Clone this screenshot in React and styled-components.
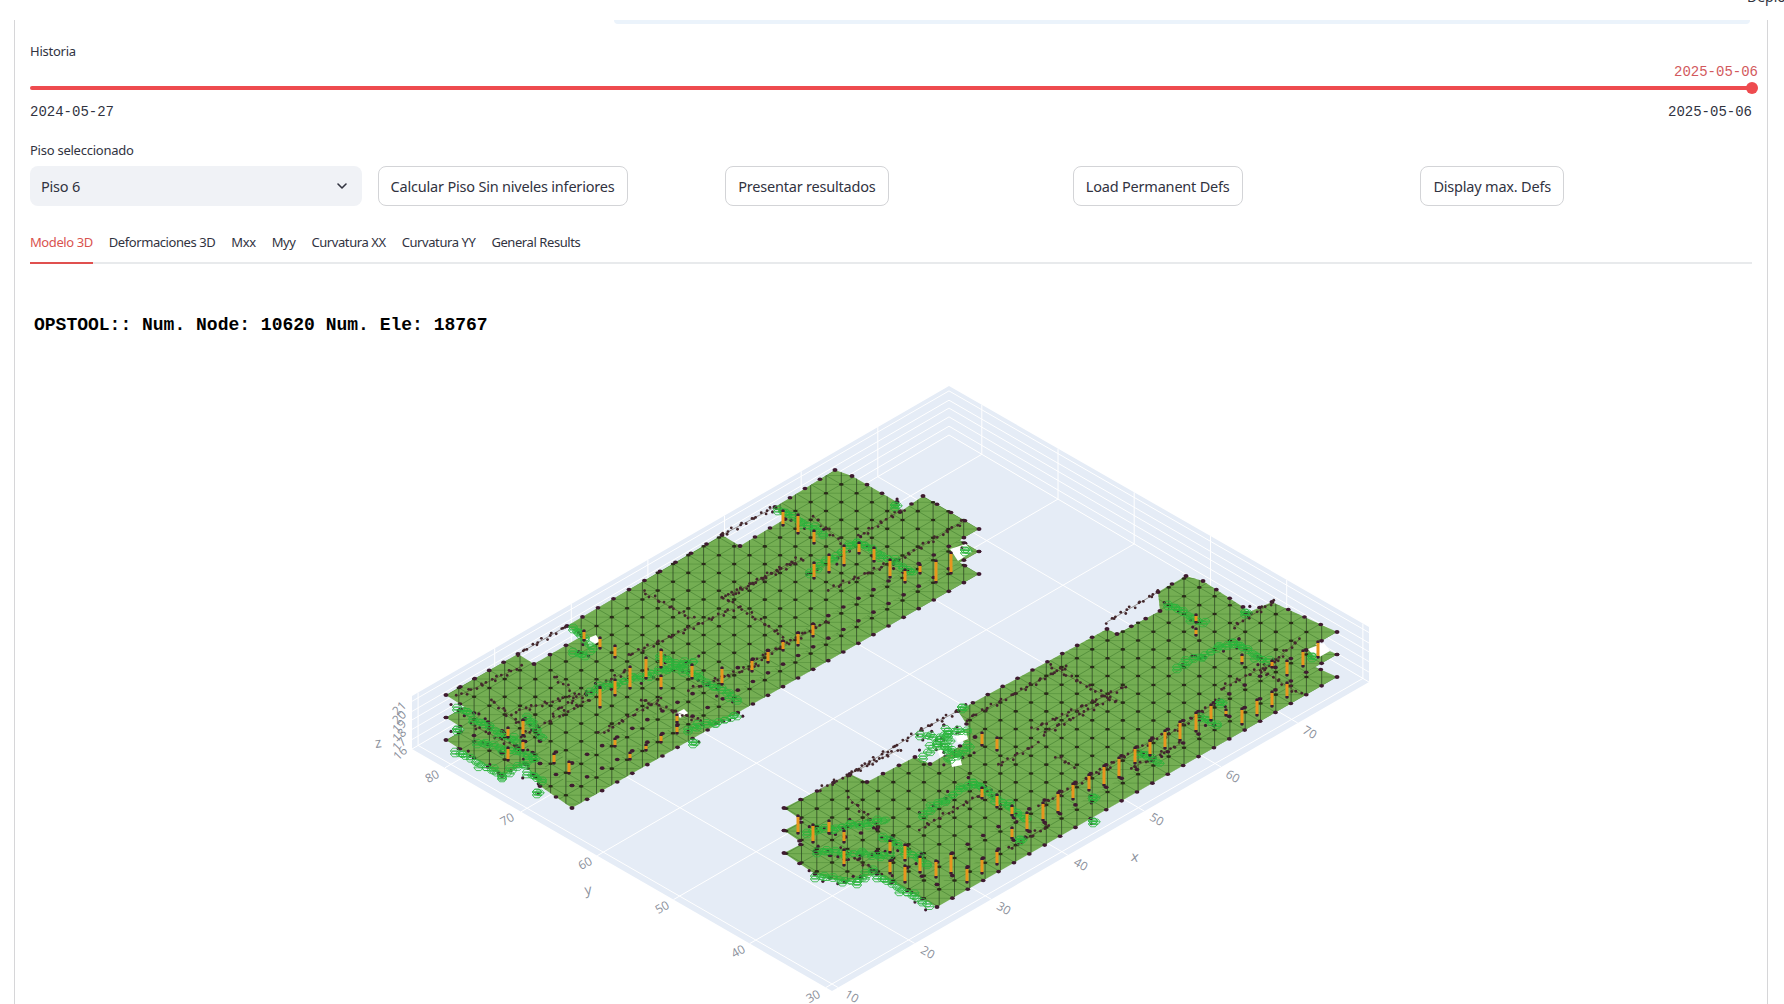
import React from "react";
import styled, { createGlobalStyle } from "styled-components";
import { ChevronDown } from "lucide-react";

const GlobalStyle = createGlobalStyle`
	html, body { margin: 0; padding: 0; background: #fff; overflow: hidden; }
	body { font-family: "Noto Sans", sans-serif; color: #31333f; }
`;

const TopBar = styled.div`
	height: 20px;
	overflow: hidden;
	padding-left: 1747px;
`;

const DeployText = styled.div`
	font-size: 14px;
	line-height: 20px;
	color: #31333f;
	white-space: nowrap;
	transform: translateY(-13px);
`;

const Frame = styled.main`
	width: 1722px;
	height: 984px;
	margin-left: 14px;
	padding: 0 15px;
	border-left: 1px solid #d6d6d8;
	border-right: 1px solid #d6d6d8;
	overflow: hidden;
`;

const InfoEdge = styled.div`
	height: 4px;
	margin: 0 2px 0 584px;
	background: #ebf3fb;
	border-radius: 0 0 6px 6px;
`;

const FieldLabel = styled.div`
	font-size: 13px;
	letter-spacing: -0.25px;
	line-height: 20px;
	height: 20px;
`;

const SliderBlock = styled.div`
	position: relative;
	margin-top: 17px;
	height: 99px;
`;

const Track = styled.div`
	position: absolute;
	left: 0;
	right: 0;
	top: 45px;
	height: 4px;
	border-radius: 2px;
	background: #ee4b4f;
`;

const Thumb = styled.div`
	position: absolute;
	right: -6px;
	top: -4px;
	width: 12px;
	height: 12px;
	border-radius: 50%;
	background: #ee4b4f;
`;

const ThumbValue = styled.div`
	position: absolute;
	right: -6px;
	top: 22px;
	font: 14px/18px "Liberation Mono", monospace;
	color: #d2595d;
`;

const Limits = styled.div`
	position: absolute;
	left: 0;
	right: 0;
	top: 62px;
	display: flex;
	justify-content: space-between;
	font: 14px/18px "Liberation Mono", monospace;
	color: #31333f;
`;

const Controls = styled.div`
	display: grid;
	grid-template-columns: repeat(5, 1fr);
	gap: 16px;
	margin-top: 6px;
`;

const Select = styled.div`
	display: flex;
	align-items: center;
	justify-content: space-between;
	height: 40px;
	padding: 0 12px 0 11px;
	border-radius: 8px;
	background: #f0f2f6;
	font-size: 14.5px;
	letter-spacing: -0.2px;
`;

const Button = styled.button`
	justify-self: start;
	height: 40px;
	padding: 0 12px;
	box-sizing: border-box;
	border: 1px solid #d3d4d7;
	border-radius: 8px;
	background: #fff;
	color: #31333f;
	font: 14.5px "Noto Sans", sans-serif;
	letter-spacing: -0.2px;
	white-space: nowrap;
`;

const TabList = styled.div`
	display: flex;
	gap: 16px;
	height: 42px;
	margin-top: 16px;
	box-sizing: border-box;
	border-bottom: 2px solid #e8eaec;
`;

const Tab = styled.div`
	height: 42px;
	box-sizing: border-box;
	padding-top: 10px;
	font-size: 13px;
	letter-spacing: -0.42px;
	line-height: 20px;
	white-space: nowrap;
	color: ${({ $active }) => ($active ? "#d9534f" : "#31333f")};
	border-bottom: 2px solid ${({ $active }) => ($active ? "#e0504f" : "transparent")};
`;

const PlotTitle = styled.div`
	margin: 49px 0 0 4px;
	font: bold 18px/24px "Liberation Mono", monospace;
	color: #000;
	white-space: pre;
`;

const PlotSvg = styled.svg`
	display: block;
	width: 1722px;
	height: 664px;
	margin-top: 2px;
`;

const TickLabel = styled.text`
	font: 12px "Open Sans", sans-serif;
	fill: #8b909b;
	text-anchor: middle;
	dominant-baseline: central;
`;

const AxisTitle = styled(TickLabel)`
	font-size: 14px;
`;

// plot floor corners in page pixels
const F = [832, 992];
const R = [1369, 683];
const L = [412, 750];
const B = [949, 436];
const LT = [412, 697];
const RT = [1369, 628];
const BT = [949, 387];

const lerp = (a, b, t) => [a[0] + (b[0] - a[0]) * t, a[1] + (b[1] - a[1]) * t];

const floorPoint = (x, y) => {
	const u = (x - 9.2) / 70.1;
	const v = (y - 29.2) / 55.1;
	return [
		F[0] + (R[0] - F[0]) * u + (L[0] - F[0]) * v + (B[0] + F[0] - R[0] - L[0]) * u * v,
		F[1] + (R[1] - F[1]) * u + (L[1] - F[1]) * v + (B[1] + F[1] - R[1] - L[1]) * u * v,
	];
};

const pts = list => list.map(p => `${p[0].toFixed(1)},${p[1].toFixed(1)}`).join(" ");

const xTicks = [10, 20, 30, 40, 50, 60, 70];
const yTicks = [30, 40, 50, 60, 70, 80];
const zLevels = [0.18, 0.37, 0.55, 0.71, 0.9];

const xLabels = [[852, 997, "10"], [928, 953, "20"], [1004, 909, "30"], [1081, 865, "40"], [1157, 820, "50"], [1233, 777, "60"], [1310, 733, "70"]];
const yLabels = [[813, 997, "30"], [738, 952, "40"], [662, 908, "50"], [585, 864, "60"], [507, 820, "70"], [432, 777, "80"]];
const zLabels = [[399, 709, "21"], [399, 718, "20"], [399, 727, "19"], [399, 736, "18"], [399, 745, "17"], [400, 754, "16"]];

function PlotBox() {
	const gridPaths = [];
	xTicks.forEach(x => {
		const a = floorPoint(x, 29.2);
		const b = floorPoint(x, 84.3);
		const top = lerp(LT, BT, (b[0] - L[0]) / (B[0] - L[0]));
		gridPaths.push([a, b, top]);
	});
	yTicks.forEach(y => {
		const a = floorPoint(9.2, y);
		const b = floorPoint(79.3, y);
		const top = lerp(RT, BT, (R[0] - b[0]) / (R[0] - B[0]));
		gridPaths.push([a, b, top]);
	});
	zLevels.forEach(f => {
		gridPaths.push([lerp(L, LT, f), lerp(B, BT, f), lerp(R, RT, f)]);
	});
	return (
		<g>
			<polygon points={pts([L, B, BT, LT])} fill="#e5ecf6" />
			<polygon points={pts([R, B, BT, RT])} fill="#e5ecf6" />
			<polygon points={pts([F, R, B, L])} fill="#e5ecf6" />
			{gridPaths.map((p, i) => (
				<polyline key={i} points={pts(p)} fill="none" stroke="#fff" strokeWidth="1" />
			))}
			<polyline points={pts([L, B, R])} fill="none" stroke="#fff" strokeWidth="1" />
		</g>
	);
}

function AxisLabels() {
	return (
		<g>
			{xLabels.map(([x, y, t]) => (
				<TickLabel key={t} x={x} y={y} transform={`rotate(30 ${x} ${y})`}>{t}</TickLabel>
			))}
			{yLabels.map(([x, y, t]) => (
				<TickLabel key={t} x={x} y={y} transform={`rotate(-30 ${x} ${y})`}>{t}</TickLabel>
			))}
			{zLabels.map(([x, y, t]) => (
				<TickLabel key={t} x={x} y={y} transform={`rotate(-45 ${x} ${y})`}>{t}</TickLabel>
			))}
			<AxisTitle x={378} y={743} transform="rotate(-8 378 743)">z</AxisTitle>
			<AxisTitle x={588} y={890} transform="rotate(-8 588 890)">y</AxisTitle>
			<AxisTitle x={1135} y={857} transform="rotate(10 1135 857)">x</AxisTitle>
		</g>
	);
}

// building data, all in page pixels at the top slab level
const building1 = {
	id: "b1",
	tip: [979, 530],
	outline: [[446, 696], [518, 655], [534, 665], [582, 637], [567, 627], [722, 536], [740, 547], [785, 520], [775, 508], [835, 471], [852, 477], [897, 503], [900, 513], [923, 497], [979, 530], [572, 764], [540, 742], [525, 720], [502, 732]],
	ties: [[518, 655, 567, 627], [722, 536, 775, 508]],
	holes: [[[950, 550], [966, 545], [972, 553], [958, 562]], [[676, 714], [684, 710], [688, 714], [680, 719]], [[586, 640], [596, 636], [600, 642], [590, 648]]],
	beams: [[553, 713, 630, 670], [627, 657, 733, 610], [643, 593, 693, 620], [727, 600, 783, 637], [720, 600, 803, 560], [753, 663, 828, 622], [458, 697, 520, 668], [517, 712, 580, 695], [553, 677, 570, 690], [860, 537, 903, 510], [897, 562, 963, 523], [813, 517, 840, 543], [730, 597, 797, 560], [520, 738, 590, 700], [600, 735, 660, 700], [690, 690, 760, 665], [470, 725, 520, 750], [490, 700, 520, 725], [640, 700, 700, 722], [830, 590, 900, 560]],
	columns: [[584, 633, 640], [600, 640, 648], [615, 648, 657], [630, 669, 688], [615, 682, 695], [600, 690, 707], [646, 660, 678], [661, 652, 667], [661, 678, 688], [692, 667, 678], [722, 670, 684], [523, 722, 735], [508, 730, 737], [523, 743, 750], [508, 750, 760], [554, 756, 763], [569, 764, 773], [615, 741, 746], [630, 755, 759], [646, 747, 750], [661, 737, 742], [677, 728, 733], [677, 717, 722], [783, 513, 525], [798, 517, 533], [814, 533, 543], [844, 548, 565], [829, 557, 572], [814, 565, 578], [859, 545, 553], [874, 550, 561], [890, 562, 577], [905, 572, 582], [920, 567, 573], [936, 563, 582], [951, 555, 573], [813, 626, 636], [798, 635, 645], [783, 643, 650], [768, 653, 662], [752, 662, 671]],
	hexes: [[457, 708, 470, 715], [457, 730, 457, 730], [455, 752, 502, 777], [502, 777, 533, 760], [537, 793, 537, 793], [527, 773, 542, 783], [527, 717, 540, 737], [473, 720, 517, 743], [477, 743, 533, 757], [573, 628, 593, 650], [573, 652, 585, 658], [590, 692, 693, 663], [660, 657, 737, 700], [688, 730, 737, 718], [693, 743, 693, 743], [778, 510, 823, 535], [810, 573, 857, 543], [857, 543, 913, 573], [895, 506, 895, 506], [965, 551, 965, 551]],
};

const building2 = {
	id: "b2",
	tip: [1337, 633],
	outline: [[784, 809], [850, 775], [867, 783], [915, 758], [930, 765], [975, 738], [958, 712], [1107, 630], [1117, 635], [1160, 612], [1158, 593], [1186, 577], [1203, 582], [1243, 608], [1247, 614], [1272, 603], [1337, 633], [937, 863], [877, 830], [845, 838], [815, 830]],
	ties: [[850, 775, 923, 730], [923, 730, 958, 712], [1107, 623, 1158, 593]],
	holes: [[[1308, 650], [1324, 644], [1330, 652], [1316, 660]], [[936, 748], [946, 746], [950, 754], [940, 758]], [[950, 760], [960, 758], [962, 766], [952, 768]], [[955, 736], [966, 732], [968, 740], [958, 744]]],
	beams: [[967, 720, 1067, 667], [1033, 730, 1127, 687], [997, 767, 1037, 745], [1043, 735, 1110, 700], [1057, 758, 1073, 767], [1050, 667, 1117, 703], [1040, 807, 1160, 737], [1167, 737, 1220, 700], [1233, 628, 1273, 603], [1263, 672, 1300, 640], [1263, 672, 1300, 695], [820, 790, 900, 750], [850, 800, 880, 830], [920, 830, 990, 790], [1010, 850, 1050, 825], [1130, 770, 1180, 745], [1220, 690, 1280, 660], [840, 850, 880, 875]],
	columns: [[798, 818, 833], [813, 827, 842], [829, 823, 833], [844, 833, 842], [844, 852, 865], [890, 843, 852], [890, 863, 873], [905, 847, 860], [905, 868, 882], [920, 859, 872], [936, 863, 877], [951, 856, 873], [967, 870, 882], [982, 861, 873], [997, 853, 864], [982, 790, 798], [997, 797, 807], [1012, 808, 815], [1027, 815, 830], [1012, 830, 838], [1043, 805, 820], [1058, 795, 812], [1073, 786, 799], [1089, 777, 790], [1104, 768, 785], [1119, 760, 777], [1135, 750, 763], [1150, 743, 755], [1165, 733, 748], [1180, 724, 740], [1196, 715, 731], [1211, 707, 720], [1226, 712, 715], [1242, 711, 724], [1257, 702, 715], [1272, 694, 706], [1287, 685, 697], [1287, 663, 675], [1303, 653, 666], [1318, 644, 657], [1242, 657, 663], [1272, 663, 667], [1196, 617, 622], [1196, 631, 635], [982, 735, 745], [997, 740, 750]],
	hexes: [[815, 877, 857, 883], [857, 883, 873, 872], [877, 877, 927, 905], [807, 833, 883, 822], [883, 837, 927, 865], [817, 852, 890, 857], [923, 815, 973, 783], [973, 783, 1027, 820], [1093, 822, 1093, 822], [1020, 840, 1020, 840], [1093, 798, 1093, 798], [920, 735, 940, 740], [940, 740, 948, 732], [948, 732, 967, 733], [923, 757, 937, 745], [937, 745, 957, 755], [957, 755, 970, 748], [948, 735, 948, 760], [962, 708, 962, 708], [1168, 605, 1203, 625], [1245, 613, 1245, 613], [1177, 668, 1233, 643], [1233, 643, 1267, 663], [1312, 657, 1312, 657], [1138, 753, 1157, 763], [1200, 717, 1217, 727], [1220, 703, 1220, 703]],
};

const levelOffsets = [45, 22.5, 0];
const stepA = [-15.3, 8.85];
const stepB = [-15.3, -8.9];

const insidePoly = (p, poly) => {
	let inside = false;
	for (let i = 0, j = poly.length - 1; i < poly.length; j = i++) {
		const [xi, yi] = poly[i];
		const [xj, yj] = poly[j];
		if (yi > p[1] !== yj > p[1] && p[0] < ((xj - xi) * (p[1] - yi)) / (yj - yi) + xi) inside = !inside;
	}
	return inside;
};

const dotsAlong = (a, b, gap) => {
	const dist = Math.hypot(b[0] - a[0], b[1] - a[1]);
	const n = Math.max(1, Math.round(dist / gap));
	const out = [];
	for (let i = 0; i <= n; i++) out.push(lerp(a, b, i / n));
	return out;
};

function Slab({ building, dy, index }) {
	const poly = building.outline.map(p => [p[0], p[1] + dy]);
	const tip = [building.tip[0], building.tip[1] + dy];
	const node = (i, j) => [tip[0] + stepA[0] * i + stepB[0] * j, tip[1] + stepA[1] * i + stepB[1] * j];
	let quad = "";
	let vert = "";
	let horiz = "";
	const inner = [];
	for (let i = -1; i < 33; i++) {
		for (let j = -1; j < 12; j++) {
			const p = node(i, j);
			const a = node(i + 1, j);
			const b = node(i, j + 1);
			const v = node(i + 1, j - 1);
			const h = node(i + 1, j + 1);
			quad += `M${p[0].toFixed(1)} ${p[1].toFixed(1)}L${a[0].toFixed(1)} ${a[1].toFixed(1)}M${p[0].toFixed(1)} ${p[1].toFixed(1)}L${b[0].toFixed(1)} ${b[1].toFixed(1)}`;
			vert += `M${p[0].toFixed(1)} ${p[1].toFixed(1)}L${v[0].toFixed(1)} ${v[1].toFixed(1)}`;
			horiz += `M${p[0].toFixed(1)} ${p[1].toFixed(1)}L${h[0].toFixed(1)} ${h[1].toFixed(1)}`;
			if (insidePoly(p, poly)) inner.push(p);
		}
	}
	const edgeDots = [];
	poly.forEach((p, i) => {
		edgeDots.push(...dotsAlong(p, poly[(i + 1) % poly.length], 17.6));
	});
	const clipId = `${building.id}-clip-${index}`;
	return (
		<g>
			<clipPath id={clipId}>
				<polygon points={pts(poly)} />
			</clipPath>
			<polygon points={pts(poly)} fill="#74ae53" />
			<g clipPath={`url(#${clipId})`} fill="none">
				<path d={horiz} stroke="#5a9640" strokeWidth="0.8" />
				<path d={quad} stroke="#4f8a38" strokeWidth="0.8" />
				<path d={vert} stroke="#2f4a24" strokeWidth="0.8" />
			</g>
			{inner.map((p, i) => (
				<ellipse key={i} cx={p[0]} cy={p[1]} rx="2.3" ry="1.3" fill="#2a2a18" />
			))}
			{edgeDots.map((p, i) => (
				<ellipse key={i} cx={p[0]} cy={p[1]} rx="2.4" ry="1.8" fill="#3f1b30" />
			))}
		</g>
	);
}

function Beams({ list }) {
	const dots = [];
	list.forEach(([x1, y1, x2, y2]) => dots.push(...dotsAlong([x1, y1], [x2, y2], 4)));
	return (
		<g>
			{list.map(([x1, y1, x2, y2], i) => (
				<line key={i} x1={x1} y1={y1} x2={x2} y2={y2} stroke="#4a3a2a" strokeWidth="1" strokeOpacity="0.5" />
			))}
			{dots.map((p, i) => (
				<circle key={i} cx={p[0] + 1.8 * Math.sin(i * 1.7)} cy={p[1] + 1.8 * Math.cos(i * 2.3)} r="1.4" fill="#43272c" />
			))}
		</g>
	);
}

const hexShape = (cx, cy) => {
	const r = 4.6;
	const verts = [0, 60, 120, 180, 240, 300].map(d => [cx + r * Math.cos((d * Math.PI) / 180), cy + r * 0.7 * Math.sin((d * Math.PI) / 180)]);
	return `M${pts(verts).replace(/ /g, "L")}Z M${verts[0]}L${verts[3]}`;
};

function HexRuns({ list }) {
	let d = "";
	const clutter = [];
	list.forEach(([x1, y1, x2, y2]) => {
		dotsAlong([x1, y1], [x2, y2], 6).forEach((p, i) => {
			d += hexShape(p[0], p[1]);
			d += hexShape(p[0] + 3 * Math.sin(i * 2.1), p[1] + 3 * Math.cos(i * 1.3));
			if (i % 2 === 0) clutter.push([p[0] + 6 * Math.sin(p[0]), p[1] + 6 * Math.cos(p[1])]);
		});
	});
	return (
		<g>
			{clutter.map((p, i) => (
				<circle key={i} cx={p[0]} cy={p[1]} r="1.6" fill="#3f1b30" />
			))}
			<path d={d} fill="none" stroke="#2ab53c" strokeWidth="0.9" strokeOpacity="0.9" />
		</g>
	);
}

function Columns({ list }) {
	return (
		<g>
			{list.map(([x, y1, y2], i) => (
				<g key={i}>
					<circle cx={x} cy={y1 - 1} r="1.8" fill="#3f1b30" />
					<circle cx={x} cy={y2 + 1} r="1.8" fill="#3f1b30" />
					<line x1={x} y1={y1} x2={x} y2={y2} stroke="#e8961e" strokeWidth="3" />
				</g>
			))}
		</g>
	);
}

function Building({ data }) {
	return (
		<g>
			{levelOffsets.map((dy, i) => (
				<Slab key={dy} building={data} dy={dy} index={i} />
			))}
			{data.holes.map((h, i) => (
				<polygon key={i} points={pts(h)} fill="#fff" />
			))}
			<Beams list={data.ties} />
			<Beams list={data.beams} />
			<HexRuns list={data.hexes} />
			<Columns list={data.columns} />
		</g>
	);
}

const tabs = ["Modelo 3D", "Deformaciones 3D", "Mxx", "Myy", "Curvatura XX", "Curvatura YY", "General Results"];
const actions = ["Calcular Piso Sin niveles inferiores", "Presentar resultados", "Load Permanent Defs", "Display max. Defs"];

export default function App() {
	return (
		<>
			<GlobalStyle />
			<TopBar>
				<DeployText>Deploy</DeployText>
			</TopBar>
			<Frame>
				<InfoEdge />
				<SliderBlock>
					<FieldLabel>Historia</FieldLabel>
					<Track>
						<Thumb />
					</Track>
					<ThumbValue>2025-05-06</ThumbValue>
					<Limits>
						<span>2024-05-27</span>
						<span>2025-05-06</span>
					</Limits>
				</SliderBlock>
				<FieldLabel>Piso seleccionado</FieldLabel>
				<Controls>
					<Select>
						<span>Piso 6</span>
						<ChevronDown size={16} strokeWidth={2.4} color="#31333f" />
					</Select>
					{actions.map(label => (
						<Button key={label}>{label}</Button>
					))}
				</Controls>
				<TabList>
					{tabs.map((t, i) => (
						<Tab key={t} $active={i === 0}>{t}</Tab>
					))}
				</TabList>
				<PlotTitle>OPSTOOL:: Num. Node: 10620 Num. Ele: 18767</PlotTitle>
				<PlotSvg viewBox="30 340 1722 664">
					<PlotBox />
					<AxisLabels />
					<Building data={building1} />
					<Building data={building2} />
				</PlotSvg>
			</Frame>
		</>
	);
}
